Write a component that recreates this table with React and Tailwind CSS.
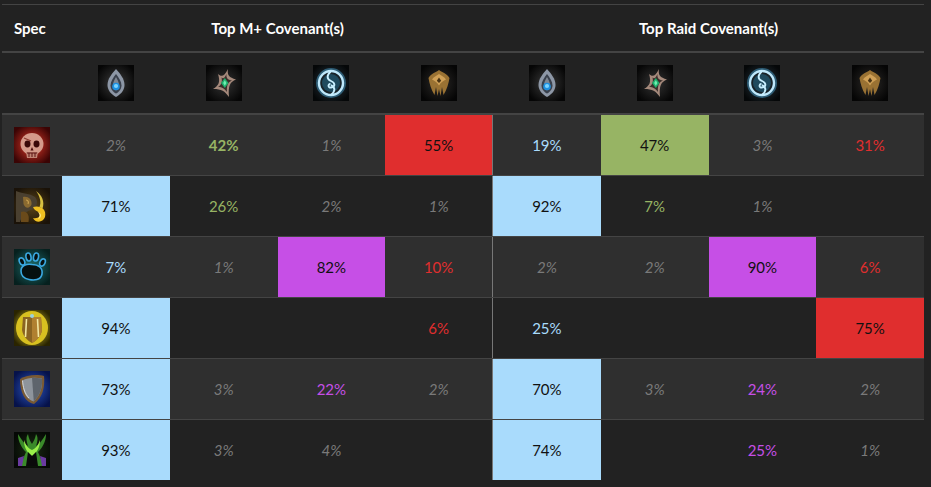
import React from "react";

const COLORS = ["#a9dbfc", "#97b464", "#c64fe6", "#e02e2e"];

const rows = [
  { icon: "skull", mplus: [2, 42, 1, 55], raid: [19, 47, 3, 31], bold: "m1" },
  { icon: "warrior", mplus: [71, 26, 2, 1], raid: [92, 7, 1, null] },
  { icon: "paw", mplus: [7, 1, 82, 10], raid: [2, 2, 90, 6] },
  { icon: "goldshield", mplus: [94, null, null, 6], raid: [25, null, null, 75] },
  { icon: "shield", mplus: [73, 3, 22, 2], raid: [70, 3, 24, 2] },
  { icon: "demon", mplus: [93, 3, 4, null], raid: [74, null, 25, 1] },
];

// covenant emblems, drawn roughly like the game icons
const Frame = ({ children, id, from = "#3a3a3a", to = "#050505" }) => (
  <svg width="36" height="36" viewBox="0 0 36 36">
    <defs>
      <radialGradient id={id} cx="50%" cy="50%" r="60%">
        <stop offset="0%" stopColor={from} />
        <stop offset="100%" stopColor={to} />
      </radialGradient>
    </defs>
    <rect width="36" height="36" fill={`url(#${id})`} />
    {children}
  </svg>
);

const Kyrian = () => (
  <Frame id="ky">
    <path d="M18 4 C22.5 9 26.5 14 26.5 20 C26.5 25.5 22.5 29.5 18 32 C13.5 29.5 9.5 25.5 9.5 20 C9.5 14 13.5 9 18 4 Z" fill="#8d97a6" />
    <path d="M18 9 C20.8 12.8 23.5 16.5 23.5 20.5 C23.5 24.2 20.8 27 18 28.6 C15.2 27 12.5 24.2 12.5 20.5 C12.5 16.5 15.2 12.8 18 9 Z" fill="#39404c" />
    <path d="M18 12 C19.5 15 21 17 21 20.5 C21 23 19.5 24.5 18 25.5 C16.5 24.5 15 23 15 20.5 C15 17 16.5 15 18 12 Z" fill="#c4ccd8" opacity="0.5" />
    <circle cx="18" cy="21.5" r="3.8" fill="#1e8fe0" />
    <circle cx="18" cy="21" r="2.1" fill="#7ad4ff" />
  </Frame>
);

const Necrolord = () => (
  <Frame id="ne" from="#333" to="#060606">
    <path d="M22 4 C21 10 23 12.5 30 14.5 C24 17 22 20.5 23 32 C18.5 26 16 24 7 24 C13 20.5 14.5 17 12 9 C15.5 12.5 18.5 11 22 4 Z" fill="#a68a7c" />
    <path d="M20.5 9 C20 12.5 21.5 15 26 15.5 C22 17.2 20.5 20 21 27 C18.3 23.7 16.5 22 12 22 C15.5 19.8 16.5 17 15.5 12.5 C17.2 14 18.8 13 20.5 9 Z" fill="#3a2f2b" />
    <path d="M18.8 13 L22.5 18 L18.8 23 L15 18 Z" fill="#1fae6c" />
    <path d="M18.8 15.3 L20.4 18 L18.8 20.7 L17.2 18 Z" fill="#6ef0b0" />
  </Frame>
);

const NightFae = () => (
  <Frame id="nf" from="#2a3a44" to="#050708">
    <circle cx="18" cy="18" r="13" fill="none" stroke="#4aa0cc" strokeWidth="4" opacity="0.5" />
    <circle cx="18" cy="18" r="12" fill="none" stroke="#bfe8fb" strokeWidth="2.4" />
    <circle cx="18" cy="18" r="9" fill="#1f4a5e" />
    <path d="M18 6 C13.5 10.5 13.5 14 18 16 C22.5 18 22.5 21.5 18 22.5 C14.8 23 14.8 19.2 17.5 18.6" fill="none" stroke="#c8efff" strokeWidth="1.9" />
    <path d="M18 30 C22.5 26 22.5 22.5 18 20" fill="none" stroke="#c8efff" strokeWidth="1.9" />
  </Frame>
);

const Venthyr = () => (
  <Frame id="ve" from="#2c2a28" to="#050505">
    <path d="M18 5 C14.5 7.5 10 8.5 7.5 13 C8.5 19 10 24 13.5 30 L15 22 L16.5 31 L18 24 L19.5 31 L21 22 L22.5 30 C26 24 27.5 19 28.5 13 C26 8.5 21.5 7.5 18 5 Z" fill="#9a7233" />
    <path d="M18 9 C15.5 11 12.5 12 11 14.5 C13.5 15.8 16 17 18 20.5 C20 17 22.5 15.8 25 14.5 C23.5 12 20.5 11 18 9 Z" fill="#d0a056" />
    <path d="M18 12.5 L15.8 15.8 L18 18 L20.2 15.8 Z" fill="#4a3414" />
  </Frame>
);

const covenantIcons = [Kyrian, Necrolord, NightFae, Venthyr];

const SpecIcon = ({ kind }) => {
  if (kind === "skull")
    return (
      <Frame id="sk" from="#e23a2a" to="#3a0404">
        <ellipse cx="18" cy="17" rx="11.5" ry="11" fill="#d59a8a" />
        <path d="M12 25 L13 31 L23 31 L24 25 Z" fill="#c08474" />
        <ellipse cx="13.5" cy="17" rx="3" ry="3.4" fill="#3a0808" />
        <ellipse cx="22.5" cy="17" rx="3" ry="3.4" fill="#3a0808" />
        <path d="M18 20 L16.5 23.5 L19.5 23.5 Z" fill="#4a0a0a" />
        <path d="M13 26 L23 26 M15 26 L15 30 M18 26 L18 30 M21 26 L21 30" stroke="#5a1010" strokeWidth="1" />
        <path d="M10 11 L17 14" stroke="#8a3a30" strokeWidth="1.2" />
      </Frame>
    );
  if (kind === "warrior")
    return (
      <Frame id="wa" from="#5a4418" to="#1a1208">
        <path d="M2 3 C10 6 15 5 21 9 C25 13 23 20 17 22 C12 23 8 28 6 34 L2 34 Z" fill="#4a4030" />
        <path d="M9 9 C14 8 18 11 17.5 16.5 C15.5 21 11 20.5 9.5 16 Z" fill="#8a6a30" />
        <path d="M12 12 C14 12 15 14 14 16" stroke="#c8a050" strokeWidth="1.2" fill="none" />
        <path d="M22 3 C28 7 31 14 28.5 20.5 L25.5 19 C27.5 14 26 8.5 22 3 Z" fill="#d8c040" />
        <path d="M19 19 C26 17 33 21 31 29 C29 35 21 35 19 30 C24 31 27.5 28 25.5 25 C23.5 22.5 21 23.5 19 19 Z" fill="#f0c020" />
        <path d="M24 24 C28 25 28 30 24 31 C26 29 26 26 24 24 Z" fill="#ffe880" />
        <path d="M7 24 C12 22 16 26 14.5 34 L7 34 Z" fill="#6a4a1a" />
      </Frame>
    );
  if (kind === "paw")
    return (
      <Frame id="pa" from="#1e6e6e" to="#06201e">
        <g fill="#061010" stroke="#3aa8e0" strokeWidth="1.6">
          <path d="M7 22 C7 16.5 12.5 14.5 18 15.5 C24.5 15.5 29 19 28 25 C27 31.5 19.5 31.5 15 30.5 C9.5 29.5 7 26.5 7 22 Z" />
          <ellipse cx="8" cy="12.5" rx="2.5" ry="3.8" transform="rotate(-25 8 12.5)" />
          <ellipse cx="14.5" cy="8" rx="2.5" ry="4" transform="rotate(-10 14.5 8)" />
          <ellipse cx="22" cy="8" rx="2.5" ry="4" transform="rotate(10 22 8)" />
          <ellipse cx="28.5" cy="13.5" rx="2.5" ry="3.8" transform="rotate(25 28.5 13.5)" />
        </g>
      </Frame>
    );
  if (kind === "goldshield")
    return (
      <Frame id="gs" from="#f4e23a" to="#2a2400">
        <ellipse cx="18" cy="18" rx="16" ry="17" fill="#d8c020" />
        <path d="M9 7 L27 7 L28 20 C27 26 23 30.5 18 33 C13 30.5 9 26 8 20 Z" fill="#8a6422" />
        <path d="M18 7 L18 33 C23 30.5 27 26 28 20 L27 7 Z" fill="#b08030" />
        <path d="M12.5 9 L11.5 27 M23.5 9 L24.5 27" stroke="#f2e6a0" strokeWidth="1.6" />
        <circle cx="18" cy="6" r="2" fill="#9ad0e0" />
      </Frame>
    );
  if (kind === "shield")
    return (
      <Frame id="sh" from="#2e5ac8" to="#06124a">
        <path d="M6 8 C12 4 23 3 30 5 C31 16 29 26 20 33 C11 31 6 22 6 8 Z" fill="#7a5a34" />
        <path d="M8.5 9.5 C13 6.5 21.5 6 28 7.5 C28.5 16 26.5 23.5 19.8 30.5 C12.5 28.5 8.5 21.5 8.5 9.5 Z" fill="#8e949c" />
        <path d="M18 6.5 L19.8 30.5 C26.5 23.5 28.5 16 28 7.5 Z" fill="#5e646c" />
        <path d="M8.5 9.5 C9 16 10.5 22.5 15 27" stroke="#d8d8d8" strokeWidth="1" fill="none" />
      </Frame>
    );
  return (
    <Frame id="dm" from="#1a2a12" to="#050805">
      <path d="M4 2 C8 8 10 12 14 14 C12 8 12 5 14 2 C15 8 17 10 18 12 C19 10 21 8 22 2 C24 5 24 8 22 14 C26 12 28 8 32 2 C32 10 28 16 24 20 L30 34 L6 34 L12 20 C8 16 4 10 4 2 Z" fill="#3a8a2a" />
      <path d="M10 8 C12 14 14 16 18 18 C22 16 24 14 26 8 C26 14 24 20 18 24 C12 20 10 14 10 8 Z" fill="#9af04a" />
      <path d="M14 20 L18 24 L22 20 L24 34 L12 34 Z" fill="#0a0a0a" />
      <path d="M4 26 L10 24 L8 34 L4 34 Z M32 26 L26 24 L28 34 L32 34 Z" fill="#6a3aa0" />
    </Frame>
  );
};

const Cell = ({ value, col, top, bold, divider }) => {
  const base =
    "h-[60px] flex items-center justify-center text-[15px]" +
    (divider ? " border-r border-[#777]" : "");
  if (value == null) return <div className={base} />;
  if (top)
    return (
      <div className={base} style={{ backgroundColor: COLORS[col] }}>
        <span className="text-[#111]">{value}%</span>
      </div>
    );
  if (value < 5)
    return (
      <div className={base}>
        <span className="italic text-[#7a7a7a]">{value}%</span>
      </div>
    );
  return (
    <div className={base}>
      <span className={bold ? "font-bold" : ""} style={{ color: COLORS[col] }}>
        {value}%
      </span>
    </div>
  );
};

export default function App() {
  return (
    <div className="min-h-screen bg-[#222222] pt-[4px] font-['Lato','Liberation_Sans',sans-serif] text-white">
      <div className="ml-[2px] w-[922px] border-t border-[#444]">
        <div className="grid grid-cols-[60px_repeat(8,minmax(0,1fr))] h-[48px] border-b-2 border-[#444] text-[15px] font-bold items-center">
          <div className="pl-3">Spec</div>
          <div className="col-span-4 text-center">Top M+ Covenant(s)</div>
          <div className="col-span-4 text-center">Top Raid Covenant(s)</div>
        </div>
        <div className="grid grid-cols-[60px_repeat(8,minmax(0,1fr))] h-[62px] border-b-2 border-[#444] items-center">
          <div />
          {[0, 1].map((g) =>
            covenantIcons.map((Icon, i) => (
              <div key={`${g}-${i}`} className="flex justify-center">
                <Icon />
              </div>
            ))
          )}
        </div>
        {rows.map((row, r) => {
          const mTop = Math.max(...row.mplus.filter((v) => v != null));
          const rTop = Math.max(...row.raid.filter((v) => v != null));
          return (
            <div
              key={r}
              className={
                "grid grid-cols-[60px_repeat(8,minmax(0,1fr))] " +
                (r % 2 === 0 ? "bg-[#2f2f2f] " : "bg-[#222222] ") +
                (r < rows.length - 1 ? "border-b border-[#444]" : "")
              }
            >
              <div className="flex items-center justify-center h-[60px]">
                <SpecIcon kind={row.icon} />
              </div>
              {row.mplus.map((v, i) => (
                <Cell
                  key={"m" + i}
                  value={v}
                  col={i}
                  top={v === mTop}
                  bold={row.bold === "m" + i}
                  divider={i === 3}
                />
              ))}
              {row.raid.map((v, i) => (
                <Cell key={"r" + i} value={v} col={i} top={v === rTop} />
              ))}
            </div>
          );
        })}
      </div>
    </div>
  );
}
